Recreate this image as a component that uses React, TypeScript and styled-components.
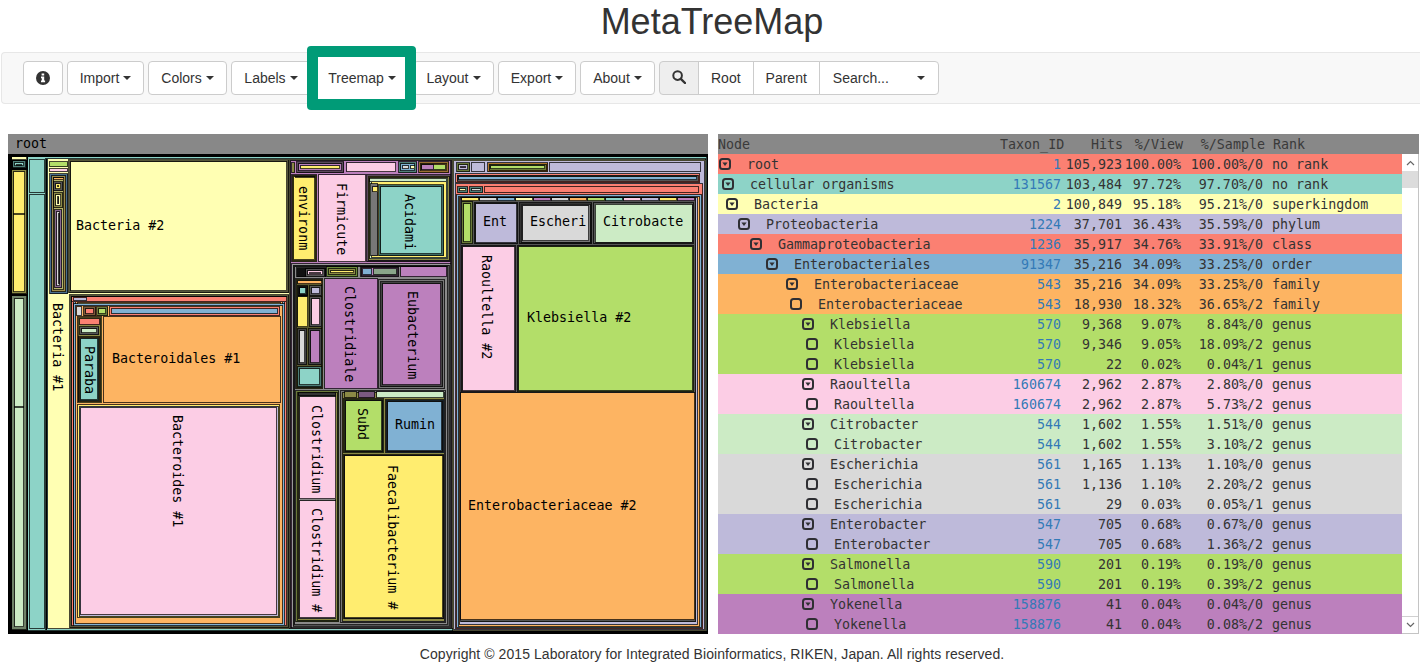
import React from 'react';
import styled, { createGlobalStyle } from 'styled-components';

const C = {
  teal: '#8dd3c7', cream: '#ffffb3', lav: '#bebada', red: '#fb8072', blue: '#80b1d3', orange: '#fdb462',
  green: '#b3de69', pink: '#fccde5', grey: '#d9d9d9', purple: '#bc80bd', mint: '#ccebc5', yellow: '#ffed6f',
};

const Global = createGlobalStyle`
  html, body { margin: 0; padding: 0; background: #fff; }
  body { font-family: "Liberation Sans", Arial, sans-serif; font-size: 14px; color: #333; }
  * { box-sizing: border-box; }
`;

const Page = styled.div`
  width: 1420px;
  height: 670px;
  overflow: hidden;
`;
const Title = styled.h1`
  margin: 0;
  height: 52px;
  padding-left: 4px;
  text-align: center;
  font-size: 36px;
  font-weight: 500;
  line-height: 44px;
  color: #333;
`;
const Navbar = styled.nav`
  display: flex;
  align-items: flex-start;
  gap: 4px;
  height: 52px;
  margin-left: 1px;
  padding: 8px 0 0 21px;
  background: #f8f8f8;
  border: 1px solid #e7e7e7;
  border-right: 0;
  border-radius: 4px 0 0 4px;
`;
const Button = styled.button<{ $marked?: boolean; $w: number }>`
  position: relative;
  z-index: ${p => (p.$marked ? 2 : 'auto')};
  display: inline-flex;
  justify-content: center;
  align-items: center;
  gap: 4px;
  width: ${p => p.$w}px;
  height: 34px;
  padding: 6px 0;
  font: 14px "Liberation Sans", Arial, sans-serif;
  color: #333;
  background: ${p => (p.$marked ? 'transparent' : '#fff')};
  border: 1px solid ${p => (p.$marked ? 'transparent' : '#ccc')};
  border-radius: 4px;
`;
const Caret = styled.span`
  width: 0;
  height: 0;
  border-top: 4px solid #333;
  border-left: 4px solid transparent;
  border-right: 4px solid transparent;
`;
const MarkWrap = styled.div`
  position: relative;
`;
const Mark = styled.div`
  position: absolute;
  z-index: 1;
  left: -8px;
  right: -7px;
  top: -15px;
  bottom: -15px;
  background: #fff;
  border: 11px solid #009b77;
  border-radius: 4px;
`;
const Group = styled.div`
  display: flex;
  height: 34px;
`;
const Addon = styled.span`
  display: flex;
  justify-content: center;
  align-items: center;
  width: 40px;
  padding-bottom: 3px;
  background: #eee;
  border: 1px solid #ccc;
  border-radius: 4px 0 0 4px;
`;
const GroupButton = styled.button<{ $wide?: boolean }>`
  display: flex;
  justify-content: space-between;
  align-items: center;
  width: ${p => (p.$wide ? '120px' : 'auto')};
  margin-left: -1px;
  padding: 6px ${p => (p.$wide ? '13px' : '12px')};
  font: 14px "Liberation Sans", Arial, sans-serif;
  color: #333;
  background: #fff;
  border: 1px solid #ccc;
  border-radius: ${p => (p.$wide ? '0 4px 4px 0' : '0')};
`;
const Main = styled.main`
  display: flex;
  gap: 10px;
  margin-top: 30px;
  padding: 0 1px 0 8px;
`;
const Panel = styled.section`
  width: 700px;
  height: 500px;
`;
const mono = `"DejaVu Sans Mono", "Liberation Mono", monospace`;
const PanelHead = styled.div`
  height: 20px;
  padding-left: 7px;
  background: #888;
  font: 13.3px/19px ${mono};
  color: #000;
`;
const Map = styled.svg`
  display: block;
  width: 700px;
  height: 480px;
  background: #000;
`;
const Cell = styled.rect`
  stroke: rgba(0, 0, 0, 0.72);
  stroke-width: 1;
  shape-rendering: crispEdges;
`;
const Label = styled.text`
  font: 13.33px ${mono};
  fill: #000;
`;
const TablePanel = styled.section`
  flex: 1;
  height: 500px;
  min-width: 0;
`;
const HeadRow = styled.div`
  display: grid;
  grid-template-columns: 282px 63px 60px 60px 82px 1fr;
  height: 20px;
  padding-top: 1px;
  background: #888;
  font: 13.33px/20px ${mono};
  color: #3a3a3a;
`;
const Right = styled.span`
  text-align: right;
  white-space: nowrap;
`;
const RankHead = styled.span`
  padding-left: 8px;
`;
const TableBody = styled.div`
  display: flex;
  height: 480px;
`;
const Rows = styled.div`
  flex: 1;
  min-width: 0;
`;
const Row = styled.div`
  display: grid;
  grid-template-columns: 280px 63px 61px 59px 82px 1fr;
  height: 20px;
  font: 13.33px/22px ${mono};
  color: #333;
  white-space: nowrap;
`;
const NodeCell = styled.span<{ $indent: number }>`
  display: flex;
  align-items: center;
  height: 20px;
  padding-left: ${p => p.$indent}px;
`;
const NodeText = styled.span`
  padding-top: 2px;
`;
const NodeIcon = styled.svg`
  flex: none;
  width: 14px;
  height: 14px;
  margin-right: 14px;
`;
const Taxon = styled(Right)`
  color: #337ab7;
`;
const Rank = styled.span`
  padding-left: 9px;
`;
const Scroll = styled.div`
  display: flex;
  flex-direction: column;
  width: 17px;
  background: #fff;
  border-right: 1px solid #c4c4c4;
  border-bottom: 1px solid #c4c4c4;
`;
const ScrollArrow = styled.div<{ $down?: boolean }>`
  display: flex;
  justify-content: center;
  align-items: center;
  height: 17px;
  border-top: ${p => (p.$down ? '1px solid #d0d0d0' : '0')};
`;
const Thumb = styled.div`
  height: 17px;
  background: #dcdcdc;
`;
const Track = styled.div`
  flex: 1;
`;
const Footer = styled.footer`
  height: 36px;
  padding: 10px 0 0 4px;
  text-align: center;
  font-size: 14px;
  line-height: 20px;
  letter-spacing: 0.065px;
  color: #333;
`;

type Rect = [number, number, number, number, string];
const nest = (x1: number, y1: number, x2: number, y2: number, cols: string[], step = 2): Rect[] =>
  cols.map((c, i) => [x1 + i * step, y1 + i * step, x2 - i * step, y2 - i * step, c] as Rect);

const olive = '#8b8a45';
const strip = [C.yellow, C.grey, C.blue, C.cream, C.purple, C.grey, C.orange, C.green, C.teal, C.pink, C.lav, C.yellow, C.purple];

const rects: Rect[] = [
  // far left columns
  [11, 156, 27, 160, C.cream],
  ...nest(12, 160, 26, 168, ['#4f7f78', C.teal, '#5a8f86'], 2),
  ...nest(11, 169, 27, 294, [olive, C.yellow], 2),
  [13, 213, 25, 214, '#111'],
  ...nest(11, 295, 27, 630, ['#6f8268', C.mint], 3),
  [14, 406, 24, 407, '#111'],
  // cellular organisms
  [27, 156, 707, 631, C.teal],
  [29, 159, 45, 193, C.teal],
  [29, 194, 45, 629, C.teal],
  [45, 158, 47, 630, '#000'],
  // Bacteria
  [47, 158, 706, 629, C.cream],
  [49, 161, 68, 167, C.green],
  [49, 168, 68, 172, C.pink],
  ...nest(49, 173, 68, 294, ['#4a6f8e', '#9a8a4a', '#b5b56a'], 2),
  [53, 177, 64, 180, C.orange],
  ...nest(53, 181, 63, 191, ['#555', C.yellow, '#8b8a45'], 2),
  ...nest(53, 192, 63, 208, ['#8b8a45', C.cream, '#555'], 2),
  ...nest(54, 209, 62, 288, ['#8a6a90', C.grey, C.lav], 2),
  ...nest(68, 159, 289, 293, ['#55553a', C.cream], 2),
  // Bacteroidetes group
  ...nest(69, 294, 289, 628, ['#55553a', C.red, C.blue, C.orange, C.cream], 2),
  [71, 296, 287, 302, C.red],
  [73, 297, 87, 301, C.lav],
  [73, 303, 285, 626, C.blue],
  [75, 305, 283, 624, C.orange],
  [76, 306, 82, 316, C.grey],
  ...nest(83, 306, 96, 316, ['#7a5a3a', C.red], 2),
  ...nest(96, 306, 108, 316, ['#6a7a3a', C.green], 2),
  ...nest(109, 306, 280, 316, [C.red, C.blue], 2),
  ...nest(77, 316, 102, 403, [C.yellow, '#8b8a45'], 1),
  [79, 318, 100, 325, C.red],
  ...nest(79, 326, 99, 335, ['#555', C.mint], 2),
  ...nest(78, 336, 100, 402, ['#a07a35', '#4d7d76', C.teal], 1),
  [103, 316, 281, 403, C.orange],
  ...nest(77, 404, 280, 618, [C.yellow, C.lav], 1.5),
  [80, 407, 277, 615, C.pink],
  // Firmicutes and friends
  ...nest(289, 159, 452, 629, ['#6d5a6d', C.purple], 1),
  [291, 162, 295, 173, olive],
  ...nest(296, 161, 344, 173, ['#5a4a5a', C.purple, C.yellow], 2),
  [346, 162, 396, 172, C.pink],
  ...nest(398, 161, 417, 173, ['#4f7f78', C.blue], 2),
  [402, 165, 409, 169, C.grey],
  [410, 165, 415, 169, C.cream],
  ...nest(418, 161, 449, 173, ['#9a6f30', C.orange], 2),
  [421, 164, 446, 170, C.green],
  [421, 164, 434, 170, C.purple],
  ...nest(291, 174, 317, 262, [olive, '#a49c3a', C.yellow], 1),
  [295, 176, 315, 177, '#111'],
  [318, 174, 366, 262, C.pink],
  ...nest(366, 174, 451, 262, ['#5d4a5d', olive, C.mint, C.yellow], 1.5),
  [369, 178, 447, 182, C.mint],
  [370, 183, 378, 256, '#777'],
  [372, 186, 378, 192, C.yellow],
  ...nest(378, 184, 444, 256, ['#3e6d66', C.teal], 2),
  // lower Firmicutes
  ...nest(291, 263, 451, 628, ['#999', '#555', '#8a8a8a'], 1.5),
  [296, 267, 326, 277, '#111'],
  ...nest(305, 268, 325, 277, ['#555', C.pink, C.purple], 2),
  ...nest(326, 266, 358, 277, ['#6a8a3a', olive, C.yellow], 2),
  ...nest(360, 266, 399, 277, ['#5a4a5a', C.purple], 1),
  [373, 268, 397, 275, '#8aa58a'],
  [362, 268, 372, 275, C.blue],
  [400, 266, 447, 277, C.purple],
  ...nest(295, 278, 323, 389, [olive, '#5a5a30'], 1),
  [297, 280, 322, 284, C.orange],
  ...nest(297, 285, 308, 296, ['#111', C.teal], 2),
  ...nest(309, 285, 322, 296, ['#555', C.lav], 2),
  [297, 296, 308, 327, C.yellow],
  ...nest(309, 296, 322, 327, ['#555', C.pink], 2),
  ...nest(297, 328, 307, 365, ['#444', C.grey], 2),
  ...nest(308, 328, 322, 365, ['#444', C.purple], 2),
  ...nest(297, 366, 322, 387, ['#4d7d76', C.teal], 2),
  [324, 278, 378, 389, C.purple],
  ...nest(378, 279, 445, 389, ['#777', '#444', C.purple], 2),
  ...nest(295, 390, 339, 622, ['#6a7a3a', olive, '#888'], 1.5),
  [298, 392, 336, 396, '#333'],
  [299, 396, 336, 499, C.pink],
  [299, 500, 336, 618, C.pink],
  ...nest(340, 390, 446, 623, ['#777', olive], 1.5),
  [344, 391, 357, 398, olive],
  [358, 391, 375, 398, '#7a5a80'],
  [376, 391, 444, 398, C.mint],
  ...nest(343, 398, 384, 453, ['#7a9a45', '#333', C.green], 1),
  ...nest(385, 399, 444, 453, ['#4a6f8e', '#333', C.blue], 1),
  ...nest(343, 454, 444, 619, ['#333', C.yellow], 1),
  // Proteobacteria
  [452, 159, 706, 631, C.cream],
  [453, 160, 705, 630, C.lav],
  ...nest(456, 162, 470, 172, ['#6a7a3a', C.lav, C.purple], 2),
  [471, 162, 485, 172, C.lav],
  ...nest(487, 162, 548, 172, ['#b0762a', '#6a7a3a', C.green], 1.5),
  [549, 162, 701, 172, C.lav],
  ...nest(455, 173, 700, 183, [C.red, '#555', C.blue], 1.5),
  [455, 183, 703, 629, C.red],
  ...nest(457, 186, 468, 193, ['#4f7f78', C.cream], 2),
  ...nest(469, 186, 483, 193, ['#4f7f78', C.grey], 2),
  [484, 186, 699, 193, C.red],
  [456, 194, 702, 628, C.blue],
  [458, 196, 700, 627, C.orange],
  [459, 197, 698, 625, C.lav],
  [460, 197, 696, 622, '#555'],
  ...strip.map((c, i) => [461 + i * 18, 197, 461 + (i + 1) * 18, 201, c] as Rect),
  ...nest(461, 201, 473, 244, ['#6a7a3a', C.green], 2),
  ...nest(474, 202, 518, 244, ['#444', C.lav], 1),
  ...nest(519, 202, 592, 244, ['#333', '#777', C.grey], 1.5),
  ...nest(593, 202, 694, 244, ['#555', C.mint], 1.5),
  ...nest(461, 245, 516, 392, ['#6d5a6d', C.pink], 1),
  ...nest(517, 245, 694, 392, ['#6a7a3a', C.green], 1),
  [460, 392, 695, 620, C.orange],
];

const texts: { t: string; x: number; y: number; rot?: boolean }[] = [
  { t: 'Bacteria #2', x: 76, y: 230 },
  { t: 'Bacteria #1', x: 53, y: 303, rot: true },
  { t: 'Paraba', x: 85, y: 346, rot: true },
  { t: 'Bacteroidales #1', x: 112, y: 363 },
  { t: 'Bacteroides #1', x: 173, y: 415, rot: true },
  { t: 'environm', x: 299, y: 186, rot: true },
  { t: 'Firmicute', x: 336.5, y: 183, rot: true },
  { t: 'Acidami', x: 405, y: 194, rot: true },
  { t: 'Clostridiale', x: 345, y: 286, rot: true },
  { t: 'Eubacterium', x: 407.5, y: 291, rot: true },
  { t: 'Clostridium', x: 312, y: 405, rot: true },
  { t: 'Clostridium #', x: 312, y: 508, rot: true },
  { t: 'Subd', x: 358, y: 408, rot: true },
  { t: 'Rumin', x: 395, y: 429 },
  { t: 'Faecalibacterium #', x: 388, y: 465, rot: true },
  { t: 'Ent', x: 483, y: 226 },
  { t: 'Escheri', x: 530, y: 226 },
  { t: 'Citrobacte', x: 603, y: 226 },
  { t: 'Raoultella #2', x: 482, y: 255, rot: true },
  { t: 'Klebsiella #2', x: 527, y: 322 },
  { t: 'Enterobacteriaceae #2', x: 468, y: 510 },
];

type Item = [string, number, boolean, string, string, string, string, string, string];
const rows: Item[] = [
  ['root', 1, true, '1', '105,923', '100.00%', '100.00%/0', 'no rank', C.red],
  ['cellular organisms', 4, true, '131567', '103,484', '97.72%', '97.70%/0', 'no rank', C.teal],
  ['Bacteria', 8, true, '2', '100,849', '95.18%', '95.21%/0', 'superkingdom', C.cream],
  ['Proteobacteria', 20, true, '1224', '37,701', '36.43%', '35.59%/0', 'phylum', C.lav],
  ['Gammaproteobacteria', 32, true, '1236', '35,917', '34.76%', '33.91%/0', 'class', C.red],
  ['Enterobacteriales', 48, true, '91347', '35,216', '34.09%', '33.25%/0', 'order', C.blue],
  ['Enterobacteriaceae', 68, true, '543', '35,216', '34.09%', '33.25%/0', 'family', C.orange],
  ['Enterobacteriaceae', 72, false, '543', '18,930', '18.32%', '36.65%/2', 'family', C.orange],
  ['Klebsiella', 84, true, '570', '9,368', '9.07%', '8.84%/0', 'genus', C.green],
  ['Klebsiella', 88, false, '570', '9,346', '9.05%', '18.09%/2', 'genus', C.green],
  ['Klebsiella', 88, false, '570', '22', '0.02%', '0.04%/1', 'genus', C.green],
  ['Raoultella', 84, true, '160674', '2,962', '2.87%', '2.80%/0', 'genus', C.pink],
  ['Raoultella', 88, false, '160674', '2,962', '2.87%', '5.73%/2', 'genus', C.pink],
  ['Citrobacter', 84, true, '544', '1,602', '1.55%', '1.51%/0', 'genus', C.mint],
  ['Citrobacter', 88, false, '544', '1,602', '1.55%', '3.10%/2', 'genus', C.mint],
  ['Escherichia', 84, true, '561', '1,165', '1.13%', '1.10%/0', 'genus', C.grey],
  ['Escherichia', 88, false, '561', '1,136', '1.10%', '2.20%/2', 'genus', C.grey],
  ['Escherichia', 88, false, '561', '29', '0.03%', '0.05%/1', 'genus', C.grey],
  ['Enterobacter', 84, true, '547', '705', '0.68%', '0.67%/0', 'genus', C.lav],
  ['Enterobacter', 88, false, '547', '705', '0.68%', '1.36%/2', 'genus', C.lav],
  ['Salmonella', 84, true, '590', '201', '0.19%', '0.19%/0', 'genus', C.green],
  ['Salmonella', 88, false, '590', '201', '0.19%', '0.39%/2', 'genus', C.green],
  ['Yokenella', 84, true, '158876', '41', '0.04%', '0.04%/0', 'genus', C.purple],
  ['Yokenella', 88, false, '158876', '41', '0.04%', '0.08%/2', 'genus', C.purple],
];

const Toggle = ({ open }: { open: boolean }) => (
  <NodeIcon viewBox="0 0 14 14">
    <rect x="1" y="2" width="10" height="10" rx="2.5" fill="none" stroke="#2f2f33" strokeWidth="2" />
    {open && <path d="M3.4 5.6h5.2L6 9z" fill="#2f2f33" />}
  </NodeIcon>
);

const Info = () => (
  <svg width="14" height="14" viewBox="0 0 14 14">
    <circle cx="7" cy="7" r="7" fill="#333" />
    <path d="M5.6 2.4h2.6v2H5.6zM5 5.4h3.2v4h.9v1.8H5V9.4h.8V7.2H5z" fill="#fff" />
  </svg>
);
const Magnifier = () => (
  <svg width="14" height="14" viewBox="0 0 14 14">
    <circle cx="5.6" cy="5.6" r="4.3" fill="none" stroke="#333" strokeWidth="2" />
    <path d="M8.8 8.8l4.2 4.2" stroke="#333" strokeWidth="2.4" strokeLinecap="round" />
  </svg>
);
const Chevron = ({ down }: { down?: boolean }) => (
  <svg width="9" height="6" viewBox="0 0 9 6">
    <path d={down ? 'M1 1l3.5 3.5L8 1' : 'M1 5l3.5-3.5L8 5'} fill="none" stroke="#666" strokeWidth="1.2" />
  </svg>
);

export default function App() {
  return (
    <Page>
      <Global />
      <Title>MetaTreeMap</Title>
      <Navbar>
        <Button $w={40}><Info /></Button>
        <Button $w={77}>Import<Caret /></Button>
        <Button $w={79}>Colors<Caret /></Button>
        <Button $w={80}>Labels<Caret /></Button>
        <MarkWrap>
          <Mark />
          <Button $marked $w={94}>Treemap<Caret /></Button>
        </MarkWrap>
        <Button $w={81}>Layout<Caret /></Button>
        <Button $w={78}>Export<Caret /></Button>
        <Button $w={75}>About<Caret /></Button>
        <Group>
          <Addon><Magnifier /></Addon>
          <GroupButton>Root</GroupButton>
          <GroupButton>Parent</GroupButton>
          <GroupButton $wide>Search...<Caret /></GroupButton>
        </Group>
      </Navbar>
      <Main>
        <Panel>
          <PanelHead>root</PanelHead>
          <Map viewBox="8 154 700 480">
            {rects.map(([a, b, c, d, f], i) => (
              <Cell key={i} x={a + 0.5} y={b + 0.5} width={Math.max(c - a - 1, 0.5)} height={Math.max(d - b - 1, 0.5)} fill={f} />
            ))}
            {texts.map(l => (
              <Label
                key={l.t}
                x={l.rot ? 0 : l.x}
                y={l.rot ? 0 : l.y}
                transform={l.rot ? `translate(${l.x} ${l.y}) rotate(90)` : undefined}
              >
                {l.t}
              </Label>
            ))}
          </Map>
        </Panel>
        <TablePanel>
          <HeadRow>
            <span>Node</span>
            <Right>Taxon_ID</Right>
            <Right>Hits</Right>
            <Right>%/View</Right>
            <Right>%/Sample</Right>
            <RankHead>Rank</RankHead>
          </HeadRow>
          <TableBody>
            <Rows>
              {rows.map((r, i) => (
                <Row key={i} style={{ background: r[8] }}>
                  <NodeCell $indent={r[1]}><Toggle open={r[2]} /><NodeText>{r[0]}</NodeText></NodeCell>
                  <Taxon>{r[3]}</Taxon>
                  <Right>{r[4]}</Right>
                  <Right>{r[5]}</Right>
                  <Right>{r[6]}</Right>
                  <Rank>{r[7]}</Rank>
                </Row>
              ))}
            </Rows>
            <Scroll>
              <ScrollArrow><Chevron /></ScrollArrow>
              <Thumb />
              <Track />
              <ScrollArrow $down><Chevron down /></ScrollArrow>
            </Scroll>
          </TableBody>
        </TablePanel>
      </Main>
      <Footer>Copyright © 2015 Laboratory for Integrated Bioinformatics, RIKEN, Japan. All rights reserved.</Footer>
    </Page>
  );
}
